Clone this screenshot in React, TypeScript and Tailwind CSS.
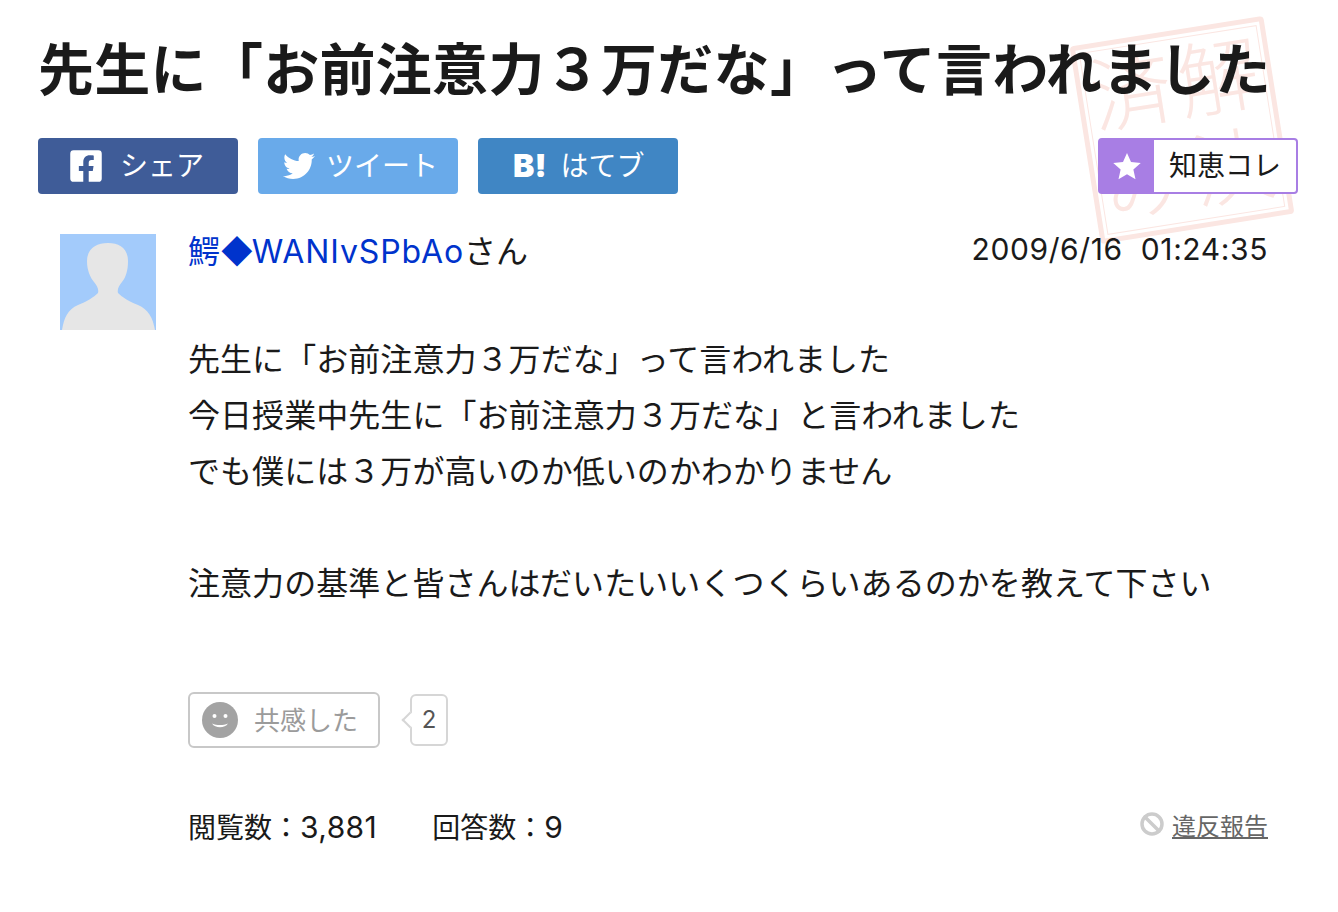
import { FaFacebookSquare, FaTwitter } from 'react-icons/fa';
import { Ban } from 'lucide-react';

const ja = { fontFamily: '"Inter", "Noto Sans CJK JP", sans-serif' };

function Stamp() {
  return (
    <div className="absolute left-[1084px] top-[30px] w-[196px] h-[200px] rotate-[-9deg] border-[5px] border-[#fbe6e2] rounded-[4px] p-[3px] pointer-events-none">
      <div className="w-full h-full border border-[#fbe6e2] grid grid-cols-2 grid-rows-2 place-items-center text-[82px] leading-none text-[#fbe6e2] font-light">
        <span>済</span>
        <span>解</span>
        <span>み</span>
        <span>決</span>
      </div>
    </div>
  );
}

function ShareButton({ className, icon, label }: { className: string; icon: React.ReactNode; label: string }) {
  return (
    <a className={`w-[200px] h-[56px] rounded-[4px] flex items-center text-white text-[28px] ${className}`}>
      {icon}
      <span>{label}</span>
    </a>
  );
}

export default function App() {
  return (
    <div className="relative w-[1338px] h-[912px] bg-white overflow-hidden text-[#1a1a1a]" style={ja}>
      <Stamp />
      <div className="relative px-[38px] pt-[32px]">
        <h1 className="text-[56px] leading-[76px] font-bold tracking-[0.3px] whitespace-nowrap text-[#1a1a1a]">
          先生に「お前注意力３万だな」って言われました
        </h1>

        <div className="flex gap-[20px] mt-[30px] pr-[2px]">
          <ShareButton className="bg-[#3f5c98] pl-[30px] gap-[16px]" icon={<FaFacebookSquare size={36} />} label="シェア" />
          <ShareButton className="bg-[#69aaea] pl-[25px] gap-[11px]" icon={<FaTwitter size={32} />} label="ツイート" />
          <ShareButton
            className="bg-[#4086c4] pl-[35px] gap-[14px]"
            icon={<span className="text-[32px] font-black leading-none">B!</span>}
            label="はてブ"
          />
          <a className="ml-auto w-[200px] h-[56px] rounded-[4px] border-2 border-[#a87ee4] flex items-center bg-white">
            <span className="w-[54px] h-full bg-[#a87ee4] flex items-center justify-center">
              <svg viewBox="0 0 24 24" className="w-[30px] h-[30px]" fill="white">
                <path d="M12 1.5l3.2 7.3 7.8.8-5.9 5.2 1.7 7.7-6.8-4-6.8 4 1.7-7.7L1 9.6l7.8-.8z" />
              </svg>
            </span>
            <span className="flex-1 text-center text-[28px] text-[#1a1a1a]">知恵コレ</span>
          </a>
        </div>

        <div className="flex gap-[32px] ml-[22px] mr-[32px] mt-[40px]">
          <div className="w-[96px] h-[96px] bg-[#a3cbfb] shrink-0 overflow-hidden">
            <svg viewBox="0 0 96 96" className="w-full h-full" fill="#e6e6e6">
              <path d="M27 27C27 15 36 9 48 9S68 15 68 27C68 36 66 43 62 48C59 52 57 55 58 59C62 63 70 68 78 71C88 75 93 84 95 96H2C4 84 8 75 18 71C26 68 34 63 38 59C39 55 37 52 34 48C30 43 27 36 27 27Z" />
            </svg>
          </div>

          <div className="flex-1 min-w-0">
            <div className="flex justify-between items-start h-[36px]">
              <a className="text-[32px] text-[#0033cc] leading-[36px] whitespace-nowrap">
                鰐◆<span className="ml-[-2px] tracking-[0.9px]">WANIvSPbAo</span>
                <span className="text-[#1a1a1a]">さん</span>
              </a>
              <span className="text-[30px] leading-[30px] tracking-[0.6px] whitespace-pre">2009/6/16  01:24:35</span>
            </div>

            <div className="mt-[62px] text-[32px] leading-[56px] tracking-[0.06px] whitespace-nowrap">
              <p>先生に「お前注意力３万だな」って言われました</p>
              <p>今日授業中先生に「お前注意力３万だな」と言われました</p>
              <p>でも僕には３万が高いのか低いのかわかりません</p>
              <p>&nbsp;</p>
              <p>注意力の基準と皆さんはだいたいいくつくらいあるのかを教えて下さい</p>
            </div>

            <div className="flex items-center mt-[80px]">
              <button className="w-[192px] h-[56px] border-2 border-[#c8c8c8] rounded-[6px] flex items-center pl-[12px] gap-[16px] text-[26px] text-[#9b9b9b]">
                <svg viewBox="0 0 36 36" className="w-[36px] h-[36px]">
                  <circle cx="18" cy="18" r="18" fill="#a3a3a3" />
                  <circle cx="12.5" cy="14" r="2" fill="white" />
                  <circle cx="23.5" cy="14" r="2" fill="white" />
                  <path d="M10 21.5c3 5 13 5 16 0-5 2-11 2-16 0z" fill="white" />
                </svg>
                共感した
              </button>
              <div className="relative ml-[30px] w-[38px] h-[52px] border-2 border-[#d6d6d6] rounded-[6px] flex items-center justify-center text-[24px] text-[#555555]">
                2
                <span className="absolute left-[-8px] top-[18px] w-[12px] h-[12px] rotate-45 bg-white border-l-2 border-b-2 border-[#d6d6d6]" />
              </div>
            </div>

            <div className="flex items-center justify-between mt-[59px] h-[40px]">
              <div className="flex gap-[55px] text-[28px]">
                <span>
                  閲覧数：<span className="text-[30px] tracking-[0.4px]">3,881</span>
                </span>
                <span>
                  回答数：<span className="text-[30px]">9</span>
                </span>
              </div>
              <a className="flex items-center gap-[8px] text-[24px] text-[#666666]">
                <Ban size={24} strokeWidth={3.5} className="text-[#cccccc] mt-[-6px]" />
                <span className="underline">違反報告</span>
              </a>
            </div>
          </div>
        </div>
      </div>
    </div>
  );
}
